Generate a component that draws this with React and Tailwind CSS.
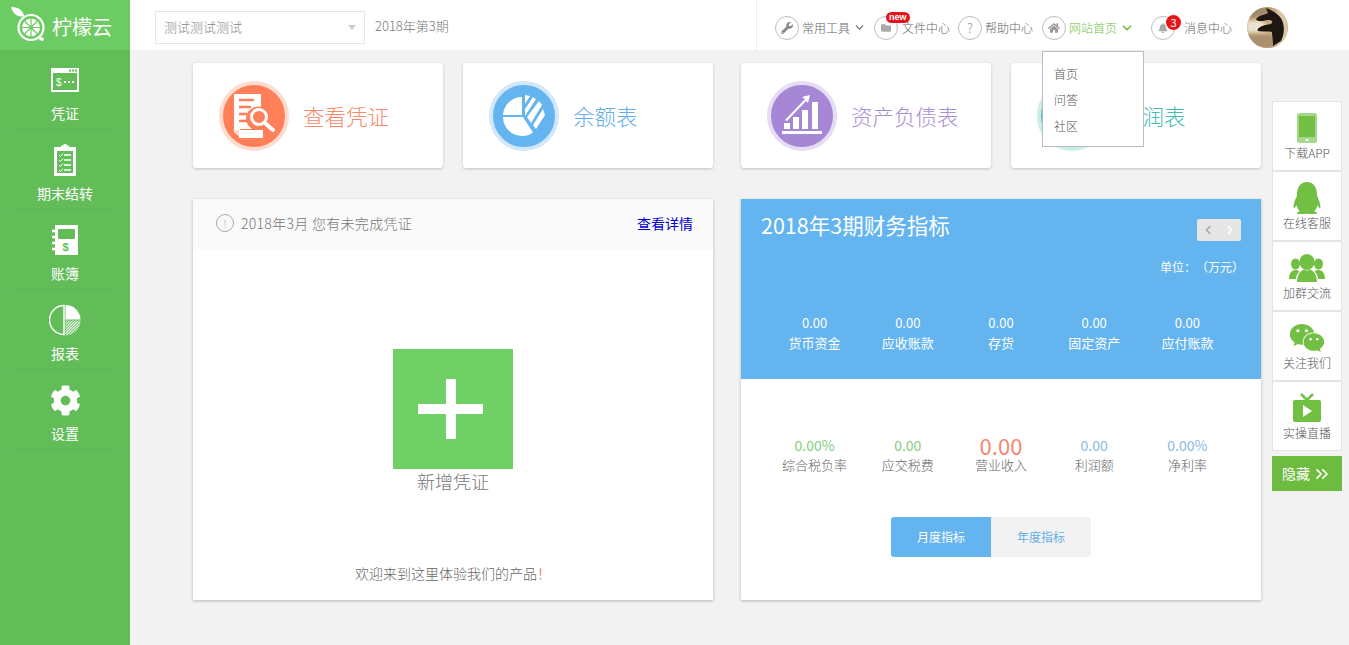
import React from 'react';
import { FaWrench, FaHome, FaBell, FaFolder, FaQq, FaWeixin, FaCog, FaChevronLeft, FaChevronRight } from 'react-icons/fa';
import { LuChevronDown, LuChevronsRight } from 'react-icons/lu';

const LemonLogo = () => (
  <svg width="38" height="38" viewBox="0 0 38 38" fill="none">
    <path d="M2 1c7 0 12 3 13 9-6 2-11-2-13-9z" fill="#fff" />
    <circle cx="22" cy="21.500" r="12.500" stroke="#fff" strokeWidth="2.200" />
    <circle cx="22" cy="21.500" r="9" fill="#fff" />
    <path d="M22 12v19M13 21.500h18M15.500 15l13 13M28.500 15l-13 13" stroke="#6dcb63" strokeWidth="1.200" />
    <circle cx="22" cy="21.500" r="1.500" fill="#6dcb63" />
    <path d="M31 31l4 1-1 3-4-1z" fill="#fff" />
  </svg>
);

const VoucherIcon = () => (
  <svg width="30" height="26" viewBox="0 0 30 26">
    <path fillRule="evenodd" fill="#fff" d="M1 1h28v24H1zM3 6v17h24V6z" />
    <rect x="19" y="2.500" width="2" height="2" fill="#62bd59" />
    <rect x="22" y="2.500" width="2" height="2" fill="#62bd59" />
    <rect x="25" y="2.500" width="2" height="2" fill="#62bd59" />
    <text x="6" y="19" fontSize="10" fill="#fff" fontFamily="Liberation Sans, sans-serif">$</text>
    <rect x="14" y="14" width="2" height="2" fill="#fff" />
    <rect x="18" y="14" width="2" height="2" fill="#fff" />
    <rect x="22" y="14" width="2" height="2" fill="#fff" />
  </svg>
);

const ClipboardIcon = () => (
  <svg width="24" height="32" viewBox="0 0 24 32">
    <path fillRule="evenodd" fill="#fff" d="M1 3h7V1.500h2.500V0h3v1.500H16V3h7v29H1zM4 7v22h16V7z" />
    <path d="M6 11l1.500 1.500L10 9.500M6 16l1.500 1.500L10 14.500M6 21l1.500 1.500L10 19.500M6 26l1.500 1.500L10 24.500" stroke="#fff" strokeWidth="1" fill="none" />
    <path d="M11 11h7M11 16h7M11 21h7M11 26h7" stroke="#fff" strokeWidth="1.500" />
  </svg>
);

const LedgerIcon = () => (
  <svg width="28" height="32" viewBox="0 0 28 32">
    <path fillRule="evenodd" fill="#fff" d="M4 1h23v30H4zM8 5a1 1 0 0 0-1 1v8a1 1 0 0 0 1 1h15a1 1 0 0 0 1-1V6a1 1 0 0 0-1-1z" />
    <path d="M1 7h4M1 13h4M1 19h4M1 25h4" stroke="#fff" strokeWidth="2.500" />
    <text x="11.500" y="27" fontSize="11" fontWeight="700" fill="#62bd59" fontFamily="Liberation Sans, sans-serif">$</text>
  </svg>
);

const PieIcon = () => (
  <svg width="32" height="32" viewBox="0 0 32 32">
    <defs>
      <pattern id="hatch" width="2" height="2" patternUnits="userSpaceOnUse" patternTransform="rotate(45)">
        <rect width="1" height="2" fill="#fff" />
      </pattern>
    </defs>
    <path d="M15 1.500a14.500 14.500 0 1 0 0 29z" fill="none" stroke="#fff" strokeWidth="1.500" />
    <path d="M16.500 1a15 15 0 0 1 15 14.500h-15z" fill="#fff" />
    <path d="M16.500 16.500h15a15 15 0 0 1-15 15z" fill="url(#hatch)" />
  </svg>
);

const VoucherSearch = () => (
  <svg width="46" height="44" viewBox="0 0 46 44">
    <path fill="#fff" d="M3 0h27v13a12 12 0 0 0-9 22H9v8L3 38z" />
    <path d="M9 36l-7 0 7 7z" fill="#ffd9c8" />
    <path d="M8 6h15M8 13h12M8 20h8M8 27h8" stroke="#ff8058" strokeWidth="2.500" />
    <rect x="8" y="36" width="24" height="8" fill="#fff" />
    <circle cx="28" cy="23" r="7.500" fill="#ff8058" stroke="#fff" strokeWidth="3" />
    <path d="M34 29l8 7" stroke="#fff" strokeWidth="4" strokeLinecap="round" />
  </svg>
);

const BalancePie = () => (
  <svg width="44" height="44" viewBox="0 0 44 44">
    <path fill="#fff" d="M20 3a19 19 0 0 0-19 18h19zM1 23a19 19 0 0 0 19 19 18.500 18.500 0 0 0 11-3.500L21 23z" />
    <path fill="#fff" d="M23 1l5 1-5 8zM31 3l3 2-11 17v-7zM37 7l3 4-11 18-4-6zM41 15l2 6-9 14-3-4z" />
  </svg>
);

const ChartIcon = () => (
  <svg width="42" height="42" viewBox="0 0 42 42" fill="#fff">
    <rect x="1" y="36" width="40" height="3" />
    <rect x="3" y="28" width="6" height="6" />
    <rect x="12" y="22" width="6" height="12" />
    <rect x="21" y="15" width="6" height="19" />
    <rect x="31" y="7" width="6" height="27" />
    <path d="M4 25L24 4l-3-2 8-2-2 8-2-2L6 26z" />
  </svg>
);

const PhoneIcon = () => (
  <svg width="20" height="30" viewBox="0 0 20 30">
    <rect x="0" y="0" width="20" height="30" rx="2.500" fill="#a5d88a" />
    <rect x="2" y="3" width="16" height="21" fill="#72c043" />
    <rect x="8.500" y="26" width="3" height="2" fill="#fff" />
  </svg>
);

const TvIcon = () => (
  <svg width="30" height="30" viewBox="0 0 30 30">
    <path d="M9 1l6 6 6-6" stroke="#72c043" strokeWidth="2.500" fill="none" />
    <rect x="1" y="7" width="28" height="22" rx="2" fill="#72c043" />
    <path d="M11 12l9 6-9 6z" fill="#fff" />
  </svg>
);

const GroupIcon = () => (
  <svg width="36" height="28" viewBox="0 0 36 28" fill="#72c043">
    <ellipse cx="6.500" cy="10" rx="4.500" ry="5.500" />
    <ellipse cx="29.500" cy="10" rx="4.500" ry="5.500" />
    <path d="M0 25c0-6 3-9 6.500-9 2 0 3 .5 4 1.500C8 20 7 22.500 7 25z" />
    <path d="M36 25c0-6-3-9-6.500-9-2 0-3 .5-4 1.500C28 20 29 22.500 29 25z" />
    <ellipse cx="18" cy="8" rx="7.500" ry="8" />
    <path d="M8 28c0-7 4-12 7-12.500 2 1.500 4 1.500 6 0 3 .5 7 5.500 7 12.500z" />
  </svg>
);

const Avatar = () => (
  <svg width="41" height="41" viewBox="0 0 41 41" className="rounded-full">
    <defs>
      <filter id="soft"><feGaussianBlur stdDeviation="1.500" /></filter>
    </defs>
    <rect width="41" height="41" fill="#c9ab80" />
    <g filter="url(#soft)">
      <path d="M0 0h24v7L0 12z" fill="#a08a68" />
      <path d="M0 14h14l8 6-4 5H0z" fill="#ece2d0" />
      <path d="M0 28h26v13H0z" fill="#a9906e" />
      <path d="M30 0h11v41H30z" fill="#d8c8a8" />
    </g>
    <path d="M19 1c5 2 11 5 14 9 5 6 5 16 1 24l-8 5c0-7-1-11-1-14-3-1-9 0-14-1-2-2 3-6 13-7 3-3 0-4-3-4-5 1-11 2-12-1 3-4 9-4 12-6z" fill="#1e1611" />
  </svg>
);

const CircleIcon = ({ children }) => (
  <span className="flex h-6 w-6 shrink-0 items-center justify-center rounded-full border border-[#bdbdbd] text-[13px] text-[#999]">
    {children}
  </span>
);

const sideItems = [
  { label: '凭证', icon: <VoucherIcon /> },
  { label: '期末结转', icon: <ClipboardIcon /> },
  { label: '账簿', icon: <LedgerIcon /> },
  { label: '报表', icon: <PieIcon /> },
  { label: '设置', icon: <FaCog size={31} color="#fff" /> },
];

const shortcuts = [
  [
    { label: '查看凭证', bg: 'bg-[#ff8058]', ring: 'border-[#ffdcd0]', text: 'text-[#f58a68]', icon: <VoucherSearch /> },
    { label: '余额表', bg: 'bg-[#64b4f0]', ring: 'border-[#d2e8fa]', text: 'text-[#64ade8]', icon: <BalancePie /> },
  ],
  [
    { label: '资产负债表', bg: 'bg-[#a687d6]', ring: 'border-[#e6dcf4]', text: 'text-[#a98ed3]', icon: <ChartIcon /> },
    { label: '利润表', bg: 'bg-[#3fc4b8]', ring: 'border-[#c8eeea]', text: 'text-[#3fbdb2]', icon: null },
  ],
];

const topStats = ['货币资金', '应收账款', '存货', '固定资产', '应付账款'];

const bottomStats = [
  { value: '0.00%', label: '综合税负率', cls: 'text-[14px] text-[#85cc7c]' },
  { value: '0.00', label: '应交税费', cls: 'text-[14px] text-[#85cc7c]' },
  { value: '0.00', label: '营业收入', cls: 'text-[22px] text-[#f58570]' },
  { value: '0.00', label: '利润额', cls: 'text-[14px] text-[#8ab8e6]' },
  { value: '0.00%', label: '净利率', cls: 'text-[14px] text-[#8ab8e6]' },
];

const sideTools = [
  { label: '下载APP', icon: <PhoneIcon /> },
  { label: '在线客服', icon: <FaQq size={32} color="#72c043" /> },
  { label: '加群交流', icon: <GroupIcon /> },
  { label: '关注我们', icon: <FaWeixin size={36} color="#72c043" /> },
  { label: '实操直播', icon: <TvIcon /> },
];

export default function App() {
  return (
    <div className="relative flex h-[645px] w-[1349px] overflow-hidden bg-[#f2f2f2] font-['Noto_Sans_CJK_SC','Noto_Sans',sans-serif]">
      <aside className="flex w-[130px] shrink-0 flex-col bg-[#62bd59] text-white">
        <div className="flex h-[50px] items-center bg-[#6dcb63] pl-[9px]">
          <LemonLogo />
          <span className="ml-[5px] mt-[3px] text-[20px] leading-none">柠檬云</span>
        </div>
        {sideItems.map((item) => (
          <div key={item.label} className="mx-[15px] flex h-[80px] flex-col items-center border-b border-[#5cb553] pt-[14px]">
            <div className="flex h-[32px] items-center justify-center">{item.icon}</div>
            <span className="mt-[7px] text-[14px] leading-[20px]">{item.label}</span>
          </div>
        ))}
      </aside>

      <div className="flex min-w-0 flex-1 flex-col">
        <header className="flex h-[50px] shrink-0 items-center bg-white pl-[25px] text-[12px] font-light text-[#666]">
          <div className="mt-[4px] flex h-[33px] w-[210px] items-center justify-between border border-[#e6e6e6] px-[8px] text-[13px] text-[#888]">
            <span className="-mt-px">测试测试测试</span>
            <span className="h-0 w-0 border-x-[4px] border-t-[5px] border-x-transparent border-t-[#ccc]" />
          </div>
          <span className="ml-[10px] mt-[1px] w-[78px] text-[13px] text-[#777]">2018年第3期</span>
          <div className="ml-[303px] flex h-full items-center border-l border-[#eeeeee] pl-[18px] pt-[5px]">
            <CircleIcon><FaWrench size={12} color="#888" /></CircleIcon>
            <span className="ml-[3px]">常用工具</span>
            <LuChevronDown size={13} className="ml-[3px]" />
            <div className="relative ml-[8px] flex items-center">
              <CircleIcon><FaFolder size={10} color="#aaa" /></CircleIcon>
              <span className="absolute left-[12px] top-[-4px] rounded-full bg-[#e8141c] px-[3px] font-['Liberation_Sans',sans-serif] text-[9px] font-bold leading-[11px] text-white">new</span>
            </div>
            <span className="ml-[4px]">文件中心</span>
            <span className="ml-[8px] flex items-center">
              <CircleIcon>?</CircleIcon>
              <span className="ml-[3px]">帮助中心</span>
            </span>
            <span className="ml-[9px] flex items-center">
              <CircleIcon><FaHome size={12} color="#999" /></CircleIcon>
              <span className="ml-[3px] text-[#72c043]">网站首页</span>
              <LuChevronDown size={14} strokeWidth={3} color="#72c043" className="ml-[3px]" />
            </span>
            <div className="relative ml-[17px] flex items-center">
              <CircleIcon><FaBell size={10} color="#aaa" /></CircleIcon>
              <span className="absolute left-[15px] top-[-1px] flex h-[15px] w-[15px] items-center justify-center rounded-full bg-[#e8141c] text-[11px] font-normal text-white">3</span>
            </div>
            <span className="ml-[9px]">消息中心</span>
            <span className="ml-[15px] flex"><Avatar /></span>
          </div>
        </header>

        <main className="flex-1 pl-[63px] pt-[13px]">
          <div className="flex w-[1068px] justify-between">
            {shortcuts.map((group, i) => (
              <div key={i} className="flex w-[520px] justify-between">
                {group.map((card) => (
                  <div key={card.label} className="flex h-[105px] w-[250px] items-center rounded-[3px] bg-white pl-[26px] shadow-[0_1px_3px_rgba(0,0,0,0.2)]">
                    <div className={`flex h-[70px] w-[70px] shrink-0 items-center justify-center rounded-full border-[4px] ${card.bg} ${card.ring}`}>
                      {card.icon}
                    </div>
                    <span className={`ml-[14px] mt-[1px] text-[21.500px] font-light leading-none ${card.text}`}>{card.label}</span>
                  </div>
                ))}
              </div>
            ))}
          </div>

          <div className="mt-[31px] flex w-[1068px] justify-between">
            <section className="flex h-[401px] w-[520px] flex-col bg-white shadow-[0_1px_3px_rgba(0,0,0,0.25)]">
              <div className="flex h-[50px] items-center justify-between bg-[#fafafa] pb-[2px] pl-[23px] pr-[20px]">
                <div className="flex items-center text-[14px] font-light text-[#777]">
                  <span className="flex h-[18px] w-[18px] items-center justify-center rounded-full border border-[#aaa] text-[10px] text-[#aaa]">!</span>
                  <span className="ml-[7px] tracking-[0.3px]">2018年3月 您有未完成凭证</span>
                </div>
                <span className="text-[14px] text-[#0000c8]">查看详情</span>
              </div>
              <div className="flex flex-1 flex-col items-center pt-[100px]">
                <div className="flex h-[120px] w-[120px] items-center justify-center bg-[#6fd066] pr-[5px]">
                  <div className="relative flex h-[60px] w-[65px] items-center justify-center">
                    <span className="h-[10px] w-[65px] bg-white" />
                    <span className="absolute h-[60px] w-[10px] bg-white" />
                  </div>
                </div>
                <span className="-mt-px text-[18px] font-light leading-[26px] text-[#777]">新增凭证</span>
                <span className="mt-[69px] text-[14px] font-light leading-[20px] text-[#666] [text-spacing-trim:space-all]">
                  欢迎来到这里体验我们的产品<span className="text-[#e8634a]">！</span>
                </span>
              </div>
            </section>

            <section className="flex h-[401px] w-[520px] flex-col bg-white shadow-[0_1px_3px_rgba(0,0,0,0.25)]">
              <div className="h-[180px] bg-[#64b4f0] text-white">
                <div className="flex items-start justify-between px-[20px] pt-[11px]">
                  <h2 className="text-[21.500px] font-normal leading-[30px]">2018年3期财务指标</h2>
                  <div className="mt-[9px] flex h-[22px] w-[44px] items-center justify-around rounded-[2px] bg-[#e6e6e6] text-[#aaa]">
                    <FaChevronLeft size={10} />
                    <FaChevronRight size={10} color="#fff" />
                  </div>
                </div>
                <p className="mt-[17px] pr-[17px] text-right text-[12px] leading-[18px] [text-spacing-trim:space-all]">单位：（万元）</p>
                <div className="mt-[37px] grid grid-cols-5 px-[27px]">
                  {topStats.map((label) => (
                    <div key={label} className="flex flex-col items-center text-[13px] leading-[20px]">
                      <span>0.00</span>
                      <span>{label}</span>
                    </div>
                  ))}
                </div>
              </div>
              <div className="mt-[56px] grid grid-cols-5 px-[27px]">
                {bottomStats.map((stat) => (
                  <div key={stat.label} className="flex flex-col items-center">
                    <span className={`h-[20px] leading-[20px] ${stat.cls}`}>{stat.value}</span>
                    <span className="text-[13px] font-light leading-[20px] text-[#666]">{stat.label}</span>
                  </div>
                ))}
              </div>
              <div className="mt-[42px] flex justify-center pr-[20px] text-[12px]">
                <span className="flex h-[40px] w-[100px] items-center justify-center rounded-l-[3px] bg-[#64b4f0] text-white">月度指标</span>
                <span className="flex h-[40px] w-[100px] items-center justify-center rounded-r-[3px] bg-[#f2f2f2] text-[#64ade8]">年度指标</span>
              </div>
            </section>
          </div>
        </main>
      </div>

      {/* dropdown over the 4th card */}
      <div className="absolute left-[1042px] top-[51px] h-[96px] w-[102px] border border-[#bbb] bg-white pl-[11px] pt-[9px] text-[12px] font-light leading-[26px] text-[#555]">
        <div>首页</div>
        <div>问答</div>
        <div>社区</div>
      </div>

      {/* floating tools on the right */}
      <div className="absolute left-[1272px] top-[101px] w-[70px]">
        {sideTools.map((tool) => (
          <div key={tool.label} className="flex h-[70px] flex-col items-center border border-[#e4e4e4] bg-white pt-[9px]">
            <div className="flex h-[34px] items-center justify-center">{tool.icon}</div>
            <span className="-mt-px text-[12px] font-light leading-[18px] text-[#555]">{tool.label}</span>
          </div>
        ))}
        <div className="mt-[5px] flex h-[35px] items-center justify-center bg-[#6dbb3f] text-[14px] text-white">
          隐藏
          <LuChevronsRight size={20} className="ml-[2px]" />
        </div>
      </div>
    </div>
  );
}
